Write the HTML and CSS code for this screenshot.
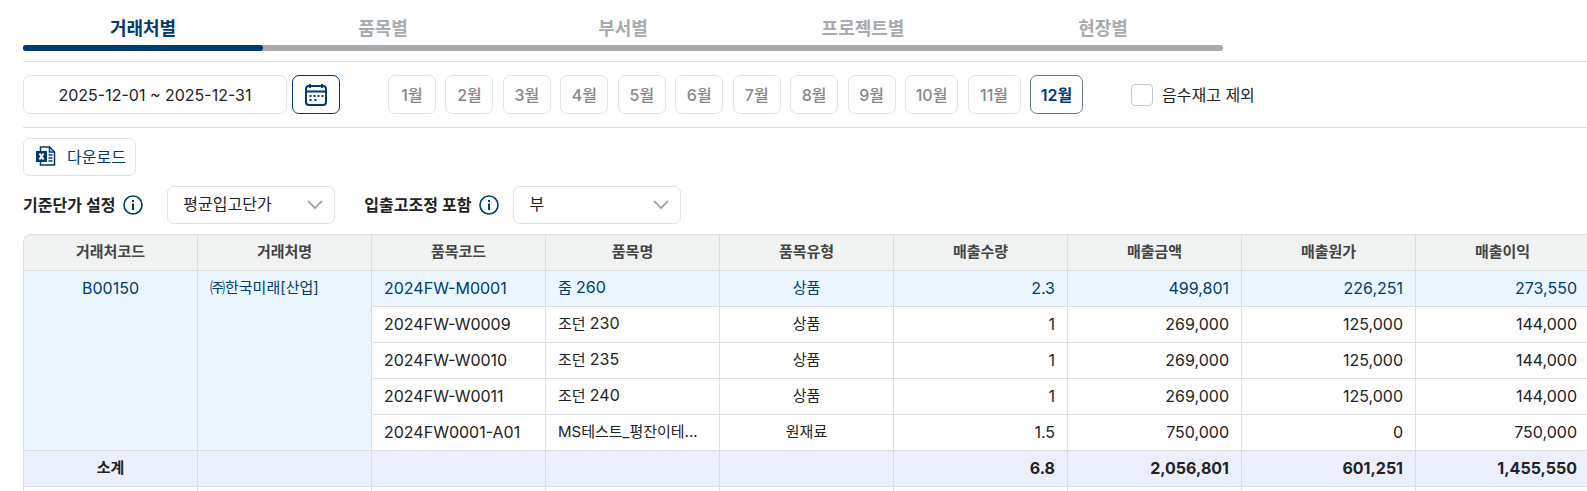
FILE: index.html
```html
<!DOCTYPE html>
<html lang="ko">
<head>
    <meta charset="UTF-8">
    <meta name="viewport" content="width=device-width, initial-scale=1.0">
    <title>매출이익 현황</title>
    <link rel="stylesheet" href="styles.css">
</head>
<body>

<div class="page">
    <!-- 탭 -->
    <nav class="tabs">
        <a href="#" class="tab active">거래처별</a>
        <a href="#" class="tab">품목별</a>
        <a href="#" class="tab">부서별</a>
        <a href="#" class="tab">프로젝트별</a>
        <a href="#" class="tab">현장별</a>
    </nav>

    <!-- 기간 검색 -->
    <form class="search-bar">
        <input type="text" class="date-input" aria-label="조회기간" value="2025-12-01 ~ 2025-12-31">
        <button type="button" class="btn-calendar" aria-label="달력">
            <svg width="24" height="24" viewBox="0 0 24 24" fill="none" stroke="#003a70" stroke-width="2">
                <rect x="2" y="3" width="20" height="19" rx="3"/>
                <path d="M2 8.500h20M6 1v4M18 1v4"/>
                <path d="M5.500 13h2M9.500 13h2M13.500 13h2M17.500 13h2M5.500 17h2M10.500 17h2"/>
            </svg>
        </button>
        <div class="months">
            <button type="button" class="month">1월</button>
            <button type="button" class="month">2월</button>
            <button type="button" class="month">3월</button>
            <button type="button" class="month">4월</button>
            <button type="button" class="month">5월</button>
            <button type="button" class="month">6월</button>
            <button type="button" class="month">7월</button>
            <button type="button" class="month">8월</button>
            <button type="button" class="month">9월</button>
            <button type="button" class="month wide">10월</button>
            <button type="button" class="month wide">11월</button>
            <button type="button" class="month wide active">12월</button>
        </div>
        <input type="checkbox" id="exceptMinus" class="check">
        <label for="exceptMinus" class="check-label">음수재고 제외</label>
    </form>

    <!-- 엑셀 다운로드 -->
    <button type="button" class="btn-download">
        <svg width="20" height="20" viewBox="0 0 20 20" fill="none" stroke="#003a70">
            <path d="M4.500 5V1h9l5 5v13h-14v-4" stroke-width="1.500"/>
            <path d="M13.500 1v5h5M12.500 9h4M12.500 12h4M12.500 15h4" stroke-width="1.500"/>
            <rect x="0" y="5" width="11" height="11" fill="#003a70" stroke="none"/>
            <path d="M3.500 7.500l4 6M7.500 7.500l-4 6" stroke="#fff" stroke-width="2"/>
        </svg>
        다운로드
    </button>

    <!-- 조회 옵션 -->
    <div class="options">
        <div class="option">
            <label for="priceType">기준단가 설정</label>
            <svg class="info" width="20" height="20" viewBox="0 0 20 20" fill="none" stroke="#003a70">
                <circle cx="10" cy="10" r="9" stroke-width="1.600"/>
                <path d="M10 8.500V15M10 5v2" stroke-width="2"/>
            </svg>
            <div class="select-box">
                <select id="priceType">
                    <option>평균입고단가</option>
                    <option>최종입고단가</option>
                </select>
                <svg class="arrow" width="16" height="10" viewBox="0 0 16 10" fill="none" stroke="#a8abad" stroke-width="2">
                    <path d="M1 1l7 7 7-7"/>
                </svg>
            </div>
        </div>
        <div class="option second">
            <label for="adjustType">입출고조정 포함</label>
            <svg class="info" width="20" height="20" viewBox="0 0 20 20" fill="none" stroke="#003a70">
                <circle cx="10" cy="10" r="9" stroke-width="1.600"/>
                <path d="M10 8.500V15M10 5v2" stroke-width="2"/>
            </svg>
            <div class="select-box">
                <select id="adjustType">
                    <option>부</option>
                    <option>여</option>
                </select>
                <svg class="arrow" width="16" height="10" viewBox="0 0 16 10" fill="none" stroke="#a8abad" stroke-width="2">
                    <path d="M1 1l7 7 7-7"/>
                </svg>
            </div>
        </div>
    </div>

    <!-- 목록 -->
    <div class="table-wrap">
        <table>
            <thead>
                <tr>
                    <th>거래처코드</th>
                    <th>거래처명</th>
                    <th>품목코드</th>
                    <th>품목명</th>
                    <th>품목유형</th>
                    <th>매출수량</th>
                    <th>매출금액</th>
                    <th>매출원가</th>
                    <th>매출이익</th>
                </tr>
            </thead>
            <tbody>
                <tr class="selected">
                    <td rowspan="5" class="group center">B00150</td>
                    <td rowspan="5" class="group ko">㈜한국미래[산업]</td>
                    <td>2024FW-M0001</td>
                    <td class="ko">줌 <span class="num">260</span></td>
                    <td class="ko center">상품</td>
                    <td class="right">2.3</td>
                    <td class="right">499,801</td>
                    <td class="right">226,251</td>
                    <td class="right">273,550</td>
                </tr>
                <tr>
                    <td>2024FW-W0009</td>
                    <td class="ko">조던 <span class="num">230</span></td>
                    <td class="ko center">상품</td>
                    <td class="right">1</td>
                    <td class="right">269,000</td>
                    <td class="right">125,000</td>
                    <td class="right">144,000</td>
                </tr>
                <tr>
                    <td>2024FW-W0010</td>
                    <td class="ko">조던 <span class="num">235</span></td>
                    <td class="ko center">상품</td>
                    <td class="right">1</td>
                    <td class="right">269,000</td>
                    <td class="right">125,000</td>
                    <td class="right">144,000</td>
                </tr>
                <tr>
                    <td>2024FW-W0011</td>
                    <td class="ko">조던 <span class="num">240</span></td>
                    <td class="ko center">상품</td>
                    <td class="right">1</td>
                    <td class="right">269,000</td>
                    <td class="right">125,000</td>
                    <td class="right">144,000</td>
                </tr>
                <tr>
                    <td>2024FW0001-A01</td>
                    <td class="ko">MS테스트_평잔이테...</td>
                    <td class="ko center">원재료</td>
                    <td class="right">1.5</td>
                    <td class="right">750,000</td>
                    <td class="right">0</td>
                    <td class="right">750,000</td>
                </tr>
                <tr class="subtotal">
                    <td class="ko center">소계</td>
                    <td></td>
                    <td></td>
                    <td></td>
                    <td></td>
                    <td class="right">6.8</td>
                    <td class="right">2,056,801</td>
                    <td class="right">601,251</td>
                    <td class="right">1,455,550</td>
                </tr>
                <tr>
                    <td></td>
                    <td></td>
                    <td></td>
                    <td></td>
                    <td></td>
                    <td></td>
                    <td></td>
                    <td></td>
                    <td></td>
                </tr>
            </tbody>
        </table>
    </div>
</div>

</body>
</html>
```

FILE: styles.css
```css
* {
    box-sizing: border-box;
}
body {
    margin: 0;
    height: 100vh;
    overflow: hidden;
    background-color: #fff;
    color: #222;
    font-family: Inter, "Noto Sans CJK KR", sans-serif;
    font-size: 16px;
}
button, input, select {
    font-family: inherit;
    color: inherit;
}
button {
    padding: 0;
    background-color: #fff;
    cursor: pointer;
}
.page {
    height: 100%;
    overflow: hidden;
    padding: 10px 0 0 23px;
}

/* 탭 */
.tabs {
    display: flex;
    position: relative;
    max-width: 1200px;
}
.tabs::before, .tab.active::after {
    content: "";
    position: absolute;
    left: 0;
    right: 0;
    bottom: 0;
    height: 6px;
    border-radius: 3px;
    background-color: #a8abad;
}
.tab {
    flex: 1;
    position: relative;
    height: 41px;
    line-height: 38px;
    text-align: center;
    text-decoration: none;
    font-size: 18px;
    font-weight: bold;
    color: #a8abad;
}
.tab.active {
    color: #003a70;
}
.tab.active::after {
    background-color: #003a70;
}

/* 기간 검색 */
.search-bar {
    display: flex;
    align-items: center;
    height: 67px;
    margin-top: 10px;
    border-top: 1px solid #dfe3e3;
    border-bottom: 1px solid #dfe3e3;
}
.date-input {
    width: 264px;
    height: 39px;
    border: 1px solid #dfe3e3;
    border-radius: 7px;
    text-align: center;
    font-size: 16px;
}
.btn-calendar {
    display: flex;
    align-items: center;
    justify-content: center;
    width: 48px;
    height: 39px;
    margin-left: 5px;
    border: 1px solid #003a70;
    border-radius: 7px;
}
.months {
    display: flex;
    justify-content: space-between;
    width: 695px;
    margin-left: 48px;
}
.month {
    width: 48px;
    height: 39px;
    padding-bottom: 2px;
    border: 1px solid #dfe3e3;
    border-radius: 7px;
    font-size: 16px;
    font-weight: 500;
    color: #888;
}
.month.wide {
    width: 53px;
}
.month.active {
    border-color: #66788c;
    color: #003a70;
    font-weight: 600;
}
.check {
    appearance: none;
    width: 22px;
    height: 22px;
    margin: 0 9px 0 48px;
    border: 1px solid #c4c8ca;
    border-radius: 4px;
}
.check-label {
    padding-bottom: 2px;
    font-size: 16px;
}

/* 엑셀 다운로드 */
.btn-download {
    display: flex;
    align-items: center;
    gap: 11px;
    height: 38px;
    margin-top: 10px;
    padding: 0 9px 2px 12px;
    border: 1px solid #dfe3e3;
    border-radius: 7px;
    font-size: 16px;
    color: #003a70;
}

/* 조회 옵션 */
.options {
    display: flex;
    margin-top: 10px;
}
.option {
    display: flex;
    align-items: center;
}
.option.second {
    margin-left: 29px;
}
.option label {
    padding-bottom: 2px;
    font-size: 16px;
    font-weight: 600;
}
.info {
    margin-left: 8px;
}
.option .select-box {
    position: relative;
    margin-left: 24px;
}
.option.second .select-box {
    margin-left: 14px;
}
.select-box select {
    appearance: none;
    display: block;
    width: 168px;
    height: 38px;
    padding: 0 40px 2px 15px;
    border: 1px solid #dfe3e3;
    border-radius: 7px;
    background-color: #fff;
    font-size: 16px;
}
.select-box .arrow {
    position: absolute;
    top: 14px;
    right: 12px;
    pointer-events: none;
}

/* 목록 */
.table-wrap {
    margin-top: 10px;
    overflow: hidden;
    border-top: 1px solid #dcdfe0;
    border-left: 1px solid #dcdfe0;
    border-top-left-radius: 8px;
}
table {
    table-layout: fixed;
    width: 1566px;
    border-spacing: 0;
}
th, td {
    height: 36px;
    padding: 0 12px 2px;
    border-right: 1px solid #dcdfe0;
    border-bottom: 1px solid #dcdfe0;
    text-align: left;
    line-height: 24px;
    white-space: nowrap;
}
th {
    background-color: #f1f2f2;
    text-align: center;
    font-size: 15px;
    font-weight: bold;
    color: #444;
}
.ko {
    font-size: 15px;
}
.num {
    font-size: 16px;
}
.center {
    text-align: center;
}
.right {
    text-align: right;
}
.group {
    padding-top: 5px;
    vertical-align: top;
}
.selected td {
    background-color: #ebf6ff;
    color: #003a70;
}
.subtotal td {
    background-color: #ebeffe;
    font-weight: bold;
}
```
